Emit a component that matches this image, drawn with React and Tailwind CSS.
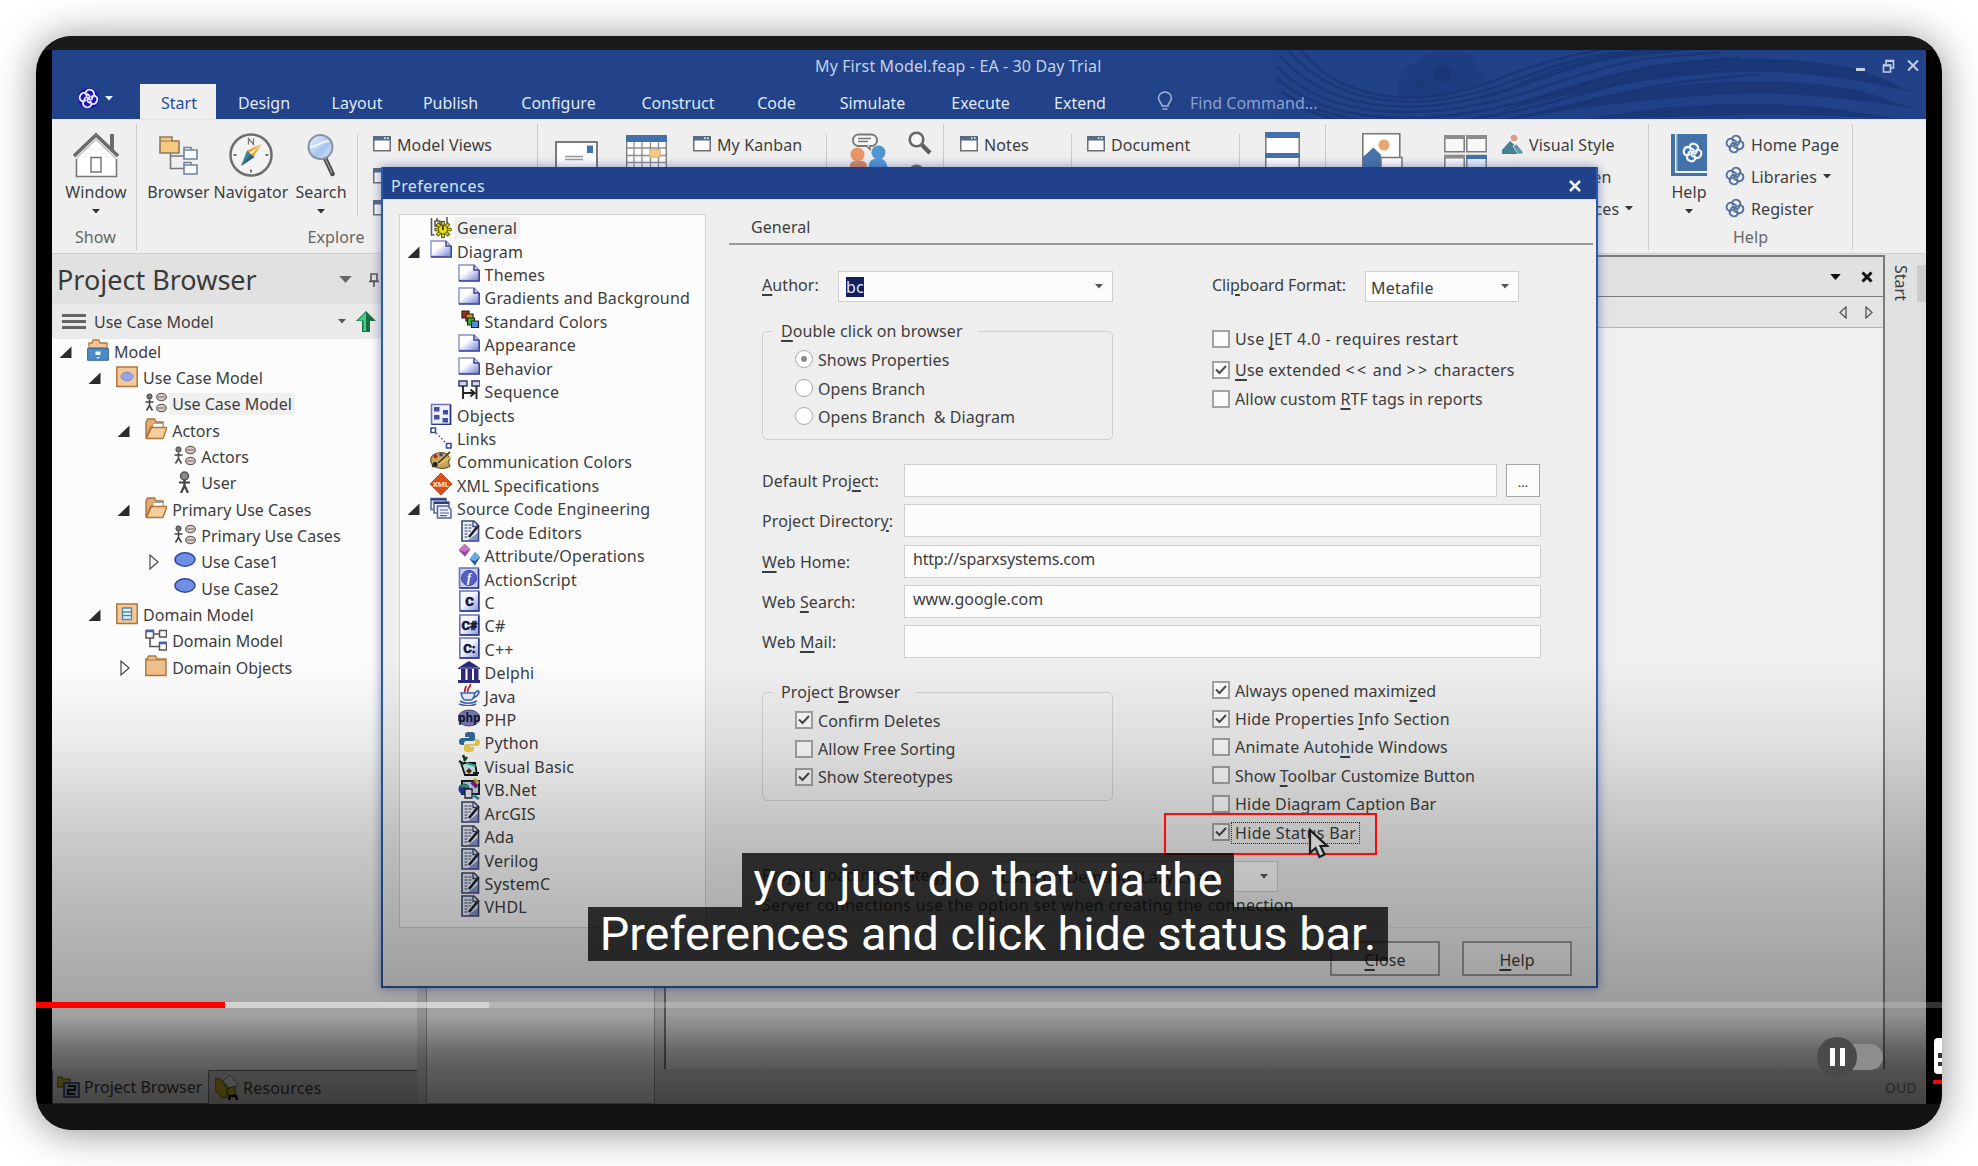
import React from "react";

/* ---------- small shared glyphs ---------- */
const Caret = ({ w = 8, color = "#333" }) => (
  <svg width={w} height={w / 2 + 0.5} viewBox="0 0 8 4.5" className="shrink-0"><path d="M0 0h8L4 4.5z" fill={color} /></svg>
);
const Knot = ({ size = 20, color = "#54719f", sw = 1.9 }) => (
  <svg width={size} height={size} viewBox="0 0 20 20" fill="none" stroke={color} strokeWidth={sw} className="shrink-0">
    {[0, 90, 180, 270].map((a) => (
      <path key={a} transform={`rotate(${a + 15} 10 10)`} d="M10 10.500C11.500 8.500 11 6.500 7.600 6.400M6 4.800C6.600 .4 13.400 .4 14.200 5.200" strokeLinecap="round" />
    ))}
    {[0, 90, 180, 270].map((a) => (
      <path key={a} transform={`rotate(${a + 15} 10 10)`} d="M6 4.800C5.700 6.400 6.200 7 7.600 7.400" strokeLinecap="round" />
    ))}
  </svg>
);
const Win = () => (
  <svg width="18" height="16" viewBox="0 0 18 16" className="shrink-0">
    <rect x=".75" y=".75" width="16.5" height="14" fill="#fbfbfb" stroke="#6b6f75" strokeWidth="1.5" />
    <path d="M0 0h18v4.5H0z" fill="#566b86" /><path d="M11 1.3h1.6v1.6H11zM14 1.3h1.6v1.6H14z" fill="#e8eef5" />
  </svg>
);

/* ---------- title bar ---------- */
const Swirls = () => (
  <svg className="absolute right-0 top-0" width="660" height="69" viewBox="1266 50 660 69" fill="none">
    <path d="M1398 95C1396 70 1412 62 1420 60C1428 48 1462 44 1476 60C1476 70 1488 72 1484 82C1450 98 1420 100 1398 95z" fill="#1d3b7d" opacity=".7" />
    <g fill="#1a3573" opacity=".6"><circle cx="1443" cy="74" r="9" /><circle cx="1420" cy="84" r="5" /></g>
    <g stroke="#1a3573" strokeWidth="2.4" opacity=".8">
      <path d="M1300 50C1345 104 1420 108 1490 82S1570 56 1600 50" />
      <path d="M1288 50C1340 112 1430 112 1510 82S1600 56 1640 50" />
      <path d="M1280 56C1335 118 1430 118 1525 84S1620 58 1680 50" />
      <path d="M1276 66C1330 122 1430 124 1540 88S1640 60 1720 52" />
      <path d="M1276 78C1330 126 1430 130 1550 94S1670 64 1740 58" />
      <path d="M1282 92C1340 130 1440 134 1560 100S1690 70 1760 64" />
      <path d="M1300 108C1360 132 1450 136 1570 106S1690 82 1760 74" />
    </g>
    <g fill="#1a3573" opacity=".8">
      <path d="M1500 112C1600 68 1700 54 1790 60S1880 82 1920 94C1860 80 1800 70 1740 72S1590 86 1500 112z" />
      <path d="M1520 118C1610 88 1710 78 1790 82S1880 100 1922 110C1860 100 1800 92 1740 94S1600 104 1520 118z" />
      <path d="M1590 119C1660 104 1750 100 1830 108L1900 119C1860 117 1800 114 1740 115z" />
      <path d="M1480 104C1550 66 1610 54 1690 50H1640C1580 58 1530 74 1480 104z" />
    </g>
  </svg>
);
const MENU = [
  ["Design", "w-[96px]"], ["Layout", "w-[90px]"], ["Publish", "w-[97px]"], ["Configure", "w-[119px]"],
  ["Construct", "w-[120px]"], ["Code", "w-[77px]"], ["Simulate", "w-[115px]"], ["Execute", "w-[101px]"], ["Extend", "w-[98px]"],
];
const TitleBar = () => (
  <header className="relative flex h-[69px] flex-col bg-[#224289] text-[#dfe9f8]">
    <Swirls />
    <div className="relative flex h-[34px] items-center pb-[2px]">
      <div className="flex-1 pl-[763px] tracking-[0.120px] text-[#c3d2ec]">My First Model.feap - EA - 30 Day Trial</div>
      <svg width="66" height="16" viewBox="0 0 66 16" className="mr-[6px]" fill="none" stroke="#c3cfe4" strokeWidth="2">
        <path d="M2 11.5h9" strokeWidth="3" />
        <path d="M29.5 7h7v7h-7zM32 6V2.5h7.5V10H37" strokeWidth="1.6" /><path d="M29 7.5h8M32 3h8" />
        <path d="M54 2.5l10 10M64 2.5l-10 10" />
      </svg>
    </div>
    <div className="relative flex h-[35px] items-center">
      <div className="flex w-[88px] items-center gap-[6px] pb-[6px] pl-[26px]">
        <span className="rounded-full bg-[#1a12b8]"><Knot size={21} color="#e6e6ff" sw={1.7} /></span>
        <Caret w={8} color="#e8f4ff" />
      </div>
      <div className="flex h-full w-[76px] items-center justify-center bg-[#efefef] text-[#1f5099]"><span className="pt-[3px] pl-[2px]">Start</span></div>
      {MENU.map(([t, w]) => <div key={t} className={`${w} pt-[3px] text-center`}>{t}</div>)}
      <svg width="16" height="20" viewBox="0 0 16 20" className="ml-[28px] mb-[2px] shrink-0" fill="none" stroke="#9fb3d6" strokeWidth="1.6">
        <path d="M5 15C5 12 1.5 10.500 1.500 7A6.400 5.900 0 0 1 14.500 7C14.500 10.500 11 12 11 15zM5.500 18h5" />
      </svg>
      <span className="pl-[17px] pt-[3px] text-[#8ba1cb]">Find Command...</span>
    </div>
  </header>
);

/* ---------- ribbon ---------- */
const House = () => (
  <svg width="46" height="46" viewBox="0 0 46 46"><path d="M3 26L23 7l20 19v19H3z" fill="#fff" /><path d="M3.500 27v17.500h40V27" fill="none" stroke="#777" strokeWidth="1.6" />
    <path d="M1 24L23 3l22 21" fill="none" stroke="#6b6b6b" strokeWidth="3.500" /><path d="M3 26.500L23 7.500l20 19" fill="none" stroke="#9a9a9a" strokeWidth="1" />
    <path d="M37 2h4v17l-4-4z" fill="#6b6b6b" /><rect x="18" y="25.500" width="10" height="14.500" fill="#fff" stroke="#777" strokeWidth="1.500" /></svg>
);
const BrowserIcon = () => (
  <svg width="40" height="42" viewBox="0 0 40 42"><path d="M1 3h12v4h7v12H1z" fill="#f7c97f" stroke="#8c7a5c" strokeWidth="1.6" /><path d="M1 7h12" stroke="#8c7a5c" />
    <path d="M11.500 19v15.500H25M11.500 22H25" fill="none" stroke="#777" strokeWidth="1.600" />
    {[0, 15].map((y) => <path key={y} transform={`translate(0 ${y})`} d="M25 13.500h7V16h6v9H25zM25 16h8" fill="#f8fbff" stroke="#70839c" strokeWidth="1.600" />)}</svg>
);
const Compass = () => (
  <svg width="44" height="44" viewBox="0 0 44 44"><circle cx="22" cy="22" r="20.500" fill="#f3f3f3" stroke="#6f6f6f" strokeWidth="2.500" />
    <path d="M32.500 11L18 17.500l6.500 6z" fill="#ef9f22" /><path d="M32.500 11L20 20l2 2z" fill="#fff0c8" /><path d="M12 33l6-15.500 7.500 6.500z" fill="#3c8595" /><path d="M12 33l9-11 4.500 2z" fill="#2c5f78" />
    <path d="M19.500 11.500V5.500l5 6v-6" fill="none" stroke="#777" strokeWidth="1.300" /><path d="M4.500 22h3M36.500 22h3M22 36.500v3" stroke="#777" strokeWidth="2" /></svg>
);
const Lens = () => (
  <svg width="28" height="44" viewBox="0 0 28 44"><defs><linearGradient id="ln" x1="0" y1="0" x2="1" y2="1"><stop offset="0" stopColor="#eaf2ff" /><stop offset=".6" stopColor="#a6c3ee" /><stop offset="1" stopColor="#e4eeff" /></linearGradient></defs>
    <path d="M18 25l7.500 16" stroke="#4b4b4b" strokeWidth="4.500" strokeLinecap="round" /><path d="M18.500 26l6.500 14" stroke="#a5a5a5" strokeWidth="1.200" />
    <circle cx="13.500" cy="14" r="12" fill="url(#ln)" stroke="#8891a0" strokeWidth="2" /><path d="M3.500 14C10 14 12 9 22 8" stroke="#fff" strokeWidth="2.500" fill="none" opacity=".7" /></svg>
);
const Mail = () => (
  <svg width="43" height="30" viewBox="0 0 43 30"><rect x="1" y="1" width="41" height="28" fill="#fff" stroke="#6e6e6e" strokeWidth="1.800" /><rect x="32" y="4.500" width="6" height="7.500" fill="#4470ae" /><path d="M10 15.500h18M10 18.500h18" stroke="#999" strokeWidth="1.300" /></svg>
);
const Calendar = () => (
  <svg width="41" height="42" viewBox="0 0 41 42"><path d="M.7 1h39.600v40H.7z" fill="#fff" stroke="#7d7d7d" strokeWidth="1.400" /><path d="M0 0h41v7H0z" fill="#4470ae" />
    <path d="M8 7v34M16 7v34M24.500 7v34M32.500 7v34M1 13h39M1 20.500h39M1 27.500h39M1 34.500h39" stroke="#8d8d8d" strokeWidth="1.300" /><rect x="24" y="15" width="10" height="7" fill="#f9ce93" stroke="#e9b268" strokeWidth="1.400" /></svg>
);
const People = () => (
  <svg width="40" height="44" viewBox="0 0 40 44"><rect x="4" y="1.500" width="24" height="11.500" rx="5.500" fill="#f6f6f6" stroke="#777" strokeWidth="1.800" /><path d="M17 12.500l4 4v-4" fill="#f6f6f6" stroke="#777" strokeWidth="1.400" /><path d="M9 5.500h13M9 8.500h10" stroke="#777" strokeWidth="1.300" />
    <circle cx="8.500" cy="21.500" r="7" fill="#e8956a" /><path d="M1 43V33q0-5 5-5h7q4 0 5 5v10z" fill="#d9895f" /><circle cx="29.500" cy="19.500" r="7" fill="#4f97d2" /><path d="M20 43V33q0-6 5-7h8q4 1 5.500 8v9z" fill="#4f97d2" /></svg>
);
const SmallLens = () => (<svg width="24" height="24" viewBox="0 0 24 24"><circle cx="8.500" cy="8.500" r="6.800" fill="#f6f6f6" stroke="#666" strokeWidth="2.600" /><path d="M14 14l8 8" stroke="#5d5d5d" strokeWidth="4.500" /></svg>);
const Bands = () => (<svg width="35" height="44" viewBox="0 0 35 44"><path d="M.8 1h33.400v42H.8z" fill="#fff" stroke="#777" strokeWidth="1.500" /><path d="M0 0h35v6H0zM0 21h35v5H0z" fill="#4470ae" /></svg>);
const Picture = () => (<svg width="41" height="44" viewBox="0 0 41 44"><path d="M.8.800h37v42H.8z" fill="#fff" stroke="#777" strokeWidth="1.600" /><circle cx="22" cy="12" r="5.500" fill="#e9a673" /><path d="M1 24l10.500-9.500L19 22v21H1z" fill="#4674a9" /><path d="M19 24.500h21V43H19z" fill="#fff" stroke="#777" strokeWidth="1.500" /></svg>);
const Tiles = () => (
  <svg width="43" height="44" viewBox="0 0 43 44"><g fill="#f8f8f8" stroke="#7a7a7a" strokeWidth="1.500"><path d="M.8.800h19.400v16H.8zM22.800.800h19.400v16H22.800zM.8 20.500h19.400V43H.8z" /><path d="M22.800 20.500h19.400V43H22.800z" fill="#e6eefb" /></g>
    <path d="M0 0h21v4H0zM22 0h21v4H22zM0 20h21v3.500H0z" fill="#8c8c8c" /><path d="M22 20h21v4H22z" fill="#4470ae" /></svg>
);
const Landscape = () => (<svg width="21" height="20" viewBox="0 0 21 20" className="shrink-0"><circle cx="12" cy="4" r="3.300" fill="#dd9f83" /><path d="M0 20v-4l8-9 12 10.500V20z" fill="#448192" /><path d="M11 12l3.500-2 6.500 8v2h-5z" fill="#6198a5" stroke="#efefef" strokeWidth=".8" /></svg>);
const Book = () => (
  <span className="relative flex h-[42px] w-[36px] items-center justify-center bg-[#4372aa] pl-[7px] pb-1">
    <svg className="absolute left-0 top-0" width="36" height="42"><path d="M6.500 0v37H36v2H4V0z" fill="#f2f6fb" /><path d="M6 0v37" stroke="#4372aa" /></svg>
    <Knot size={21} color="#f2f6fb" sw={2} />
  </span>
);
const Big = ({ icon, label, w, caret }) => (
  <div className={`${w} flex shrink-0 flex-col items-center pt-[9px]`}>
    <div className="flex h-[51px] items-center">{icon}</div>
    <span className="h-[24px] leading-[24px]">{label}</span>
    {caret && <span className="pt-[5px]"><Caret /></span>}
  </div>
);
const Line = ({ icon, children, caret }) => (
  <div className="flex h-[32px] items-center gap-[6px] whitespace-nowrap">{icon}<span className="pt-px">{children}</span>{caret && <Caret w={8} />}</div>
);
const Group = ({ w, label, children }) => (
  <div className={`${w} flex shrink-0 flex-col`}>
    <div className="flex h-[126px] flex-col border-r border-[#cacaca] mt-[4px]">
      <div className="-mt-[4px] flex h-[104px]">{children}</div>
      <div className="text-center leading-[26px] text-[#666]">{label}</div>
    </div>
  </div>
);
const Sep = () => <div className="mt-[14px] h-[83px] w-px shrink-0 bg-[#cacaca]" />;
const Ribbon = () => (
  <div className="flex h-[135px] border-b border-[#cfcfcf] border-t border-t-[#dbe6fa] bg-[#efefef] tracking-[0.1px]">
    <Group w="w-[85px]" label={<span className="pl-[3px]">Show</span>}><Big w="w-[88px]" icon={<House />} label="Window" caret /></Group>
    <Group w="w-[401px]" label={<span className="pr-[2px]">Explore</span>}>
      <Big w="w-[83px]" icon={<BrowserIcon />} label="Browser" />
      <Big w="w-[62px]" icon={<Compass />} label="Navigator" />
      <Big w="w-[78px]" icon={<Lens />} label="Search" caret />
      <div className="-ml-[3px]"><Sep /></div>
      <div className="flex flex-col pl-[15px] pt-[8px]"><Line icon={<Win />}>Model Views</Line><Line icon={<Win />} /><Line icon={<Win />} /></div>
    </Group>
    <Group w="w-[406px]" label="">
      <div className="pl-[17px] pt-[21px]"><Mail /></div>
      <div className="pl-[28px] pt-[15px]"><Calendar /></div>
      <div className="pl-[26px] pt-[8px]"><Line icon={<Win />}>My Kanban</Line></div>
      <div className="flex-1" /><Sep />
      <div className="pl-[22px] pt-[13px]"><People /></div>
      <div className="flex flex-col gap-[9px] pl-[19px] pr-[11px] pt-[11px]"><SmallLens /><SmallLens /></div>
    </Group>
    <Group w="w-[382px]" label="">
      <div className="w-[127px] pl-[16px] pt-[8px]"><Line icon={<Win />}>Notes</Line></div><Sep />
      <div className="w-[167px] pl-[15px] pt-[8px]"><Line icon={<Win />}>Document</Line></div><Sep />
      <div className="pl-[25px] pt-[12px]"><Bands /></div>
    </Group>
    <Group w="w-[323px]" label="">
      <div className="pl-[36px] pt-[13px]"><Picture /></div>
      <div className="pl-[41px] pt-[15px]"><Tiles /></div>
      <div className="flex flex-col pl-[15px] pt-[8px]"><Line icon={<Landscape />}>Visual Style</Line><Line icon={<Landscape />}>Full Screen</Line><Line icon={<Landscape />} caret>Preferences</Line></div>
    </Group>
    <Group w="w-[204px]" label="Help">
      <Big w="w-[80px]" icon={<Book />} label="Help" caret />
      <div className="flex flex-col pt-[8px] -ml-[4px]"><Line icon={<Knot />}>Home Page</Line><Line icon={<Knot />} caret>Libraries</Line><Line icon={<Knot />}>Register</Line></div>
    </Group>
  </div>
);

/* ---------- tree icons ---------- */
const S = ({ children, ...p }) => <svg width="22" height="22" viewBox="0 0 22 22" fill="none" className="shrink-0" {...p}>{children}</svg>;
const I = {
  model: <S><path d="M2 9V4h3l1-3h6l1 3h7v5z" fill="#f3c592" stroke="#b5793c" strokeWidth="1.300" /><path d="M.6 9.500h20.800v11.800H.6z" fill="#4c8cc4" stroke="#35699a" /><path d="M8.500 12.500h5v3.500h-5z" fill="#e8f2fb" /><path d="M9 18h4l-2 2z" fill="#cde" /></S>,
  ucPkg: <S><rect x=".8" y="1" width="20.400" height="19.500" fill="#f5c898" stroke="#ad763f" strokeWidth="1.500" /><ellipse cx="11" cy="10.500" rx="6" ry="4.300" fill="#97a5e6" stroke="#7d8bd0" /></S>,
  dmPkg: <S><rect x=".8" y="1" width="20.400" height="19.500" fill="#f5c898" stroke="#ad763f" strokeWidth="1.500" /><path d="M6.500 5h9v11.500h-9z" fill="#eaf4fb" stroke="#4d86ae" strokeWidth="1.300" /><path d="M6.500 9h9M6.500 12.500h9" stroke="#4d86ae" strokeWidth="1.300" /></S>,
  ucDia: <S><circle cx="4.500" cy="4.500" r="2.600" fill="#777" stroke="#444" /><path d="M4.500 7.500V14M0.500 10h8M4.500 13.500L1.500 18.500M4.500 13.500l3 5" stroke="#444" strokeWidth="1.600" /><g fill="#ddd0cc" stroke="#6b625f" strokeWidth="1.300"><ellipse cx="16.500" cy="5" rx="4.800" ry="3.600" /><ellipse cx="16.500" cy="16" rx="4.800" ry="3.600" /></g><path d="M13 5h7M13 16h7" stroke="#6b625f" /></S>,
  user: <S><circle cx="10.500" cy="5" r="4" fill="#8a8a8a" stroke="#555" strokeWidth="1.500" /><path d="M10.500 9v6M5 11.500h11M10.500 14.500L7 22M10.500 14.500L14 22" stroke="#444" strokeWidth="2.200" /></S>,
  open: <S><path d="M1 20V4l1.500-3h7l1.500 3h7v5H6z" fill="#e3ab72" stroke="#ad763f" strokeWidth="1.400" /><path d="M8 5.500h10V11H8z" fill="#fff" stroke="#999" strokeWidth=".8" /><path d="M1.500 20.500L6.500 9.500H22l-4 11z" fill="#f8cd9c" stroke="#ad763f" strokeWidth="1.400" /></S>,
  closed: <S><path d="M.8 20.500V4h1.500L3.500 1h7L12 4h9v16.500z" fill="#efc08c" stroke="#ad763f" strokeWidth="1.400" /><path d="M1 5h20" stroke="#ad763f" /></S>,
  oval: <S><ellipse cx="11" cy="9.500" rx="10" ry="6.700" fill="#6f8ee6" stroke="#34489b" strokeWidth="1.500" /></S>,
  dmDia: <S><g fill="#fff" stroke="#555" strokeWidth="1.500"><path d="M1 1.500h7.500V9H1zM14.500 1.500h7V8h-7zM14.500 13.500h7V21h-7z" /></g><path d="M1 2h8M14.500 14h7" stroke="#3b66ad" strokeWidth="2.500" /><path d="M9 5h5M5 9v8.500h9" stroke="#555" strokeWidth="1.600" /></S>,
  gear: <S><path d="M1.500 2v17h3M7 5V2M5 5h5v5H5z" stroke="#555" strokeWidth="1.600" /><path d="M17 1v8" stroke="#555" strokeWidth="1.500" /><g stroke="#3a3800" strokeWidth="3.600"><path d="M13 5v17M4.500 13.500h17M7 7.500l12 12M19 7.500l-12 12" /></g><g stroke="#d8d000" strokeWidth="2"><path d="M13 6v15M5.500 13.500h15.500M7.500 8l11 11M18.500 8l-11 11" /></g><circle cx="13" cy="13.500" r="4.500" fill="#e6df12" stroke="#5b5700" /><path d="M13 9v5" stroke="#444" strokeWidth="2" /></S>,
  page: <S><defs><linearGradient id="pg" x1="0" y1="0" x2="1" y2="1"><stop offset=".4" stopColor="#fff" /><stop offset="1" stopColor="#7480d4" /></linearGradient></defs><path d="M1 2h15l5 5v10.500H1z" fill="url(#pg)" stroke="#8a8fc8" strokeWidth="1.400" /><path d="M16 2v5h5M21.300 7v11H1" stroke="#3b429b" strokeWidth="1.500" /></S>,
  colors: <S><g stroke="#222" strokeWidth="1.200"><path d="M4 2h7v7H4z" fill="#b02a14" /><path d="M8 5h7v7H8z" fill="#d98a1e" /><path d="M9.500 9h7v7h-7z" fill="#35b52b" /><path d="M13.500 12h7v6.500h-7z" fill="#4b93d8" /></g></S>,
  seq: <S><path d="M1 1h8v5H1zM14 1h8v5h-8z" fill="#cdd3ee" stroke="#333a66" strokeWidth="1.500" /><path d="M5 6v13M18.500 6v13M5 13h11M12.500 9.500l4 3.500-4 3.500" stroke="#222" strokeWidth="1.900" /></S>,
  objects: <S><path d="M1.500 1.500h19v20h-19z" fill="#eef0fb" stroke="#6a73b8" strokeWidth="1.600" /><path d="M20.500 2v19.500H2" stroke="#2d3684" strokeWidth="1.500" /><g fill="#444f9e"><path d="M4 4h5.500v4.500H4zM13 7h5v4.500h-5zM4 12h5.500v4.500H4zM12.500 15h5.500v4.500h-5.500z" /></g></S>,
  links: <S><path d="M1 1h4.500v4.500H1zM16.500 16.500H21V21h-4.500z" fill="#fff" stroke="#3e4a9b" strokeWidth="1.600" /><path d="M6 6l10 10" stroke="#444e86" strokeWidth="1.500" strokeDasharray="1.500 2.200" /></S>,
  palette: <S><path d="M1 8C3 3 12 1 17 4l3 5c-3 3-1 5 0 7-3 3-10 3-15 1-3-2-5-5-4-9z" fill="#c8a45c" stroke="#6f5520" strokeWidth="1.200" /><circle cx="5.500" cy="6.500" r="2" fill="#b52a22" /><circle cx="11" cy="4.800" r="1.700" fill="#2c3fb0" /><path d="M3 17L20 2M9 14L21 7" stroke="#e1c466" strokeWidth="2" /><path d="M2 17l5-4M8 13l12-11" stroke="#332b18" strokeWidth="1.500" /><circle cx="5" cy="14.500" r="2.500" fill="#222" /></S>,
  xml: <S><path d="M11 0l11 11-11 11L0 11z" fill="#dc4f1b" stroke="#a93a12" strokeWidth=".8" /><text x="11" y="14" fontSize="8" fontWeight="700" fill="#ffe9c8" textAnchor="middle" fontFamily="Roboto, sans-serif" letterSpacing="0">XML</text></S>,
  source: <S><g fill="#eef1fb" stroke="#55659f" strokeWidth="1.500"><path d="M1 1.500h15v11H1z" /><path d="M4 5h15v11H4z" /><path d="M7.500 9h10l3.500 3.500V21H7.500z" /></g><path d="M1 2.500h15M4 6h15" stroke="#2c3c80" strokeWidth="1.800" /><path d="M10 13h8M10 16h9M10 18.700h7" stroke="#55659f" strokeWidth="1.200" /></S>,
  editor: <S><path d="M4 1h12l4.500 4.500V21H4z" fill="#e9edf8" stroke="#3d4468" strokeWidth="1.600" /><path d="M6.500 5h7M6.500 8h7M6.500 11h6M6.500 14h4M6.500 17h3" stroke="#6f7796" strokeWidth="1.300" strokeDasharray="3 1" /><path d="M20.500 12v9H9z" fill="#4857b0" opacity=".6" /><path d="M20.500 5.500L11 17" stroke="#1d1f2c" strokeWidth="2.600" /><path d="M15 1v5.500h5" stroke="#3d4468" strokeWidth="1.300" /></S>,
  attr: <S><path d="M6.500-.5L12.500 5 7 12.500.500 6z" fill="#c873c0" /><path d="M.5 6L7 8l5.500-3L7 12.500z" fill="#93428f" /><path d="M17 7.500L22.500 13 17 21l-5.500-6z" fill="#6aa8df" /><path d="M11.500 15l5.500 2 5-4-5 8.500z" fill="#2d5f9c" /></S>,
  as: <S><path d="M1.500 1h19v20h-19z" fill="#c8cef0" stroke="#6a73b8" strokeWidth="1.600" /><path d="M20.500 2v19H2" stroke="#2d3684" strokeWidth="1.400" /><circle cx="11" cy="11" r="7.500" fill="#5560c4" stroke="#3b429b" /><text x="11" y="15" fontSize="12" fontStyle="italic" fontWeight="700" fill="#fff" textAnchor="middle" fontFamily="Liberation Serif, serif">f</text></S>,
  arch: <S><path d="M0 7L6 3 11 0l5 3 6 4v1H0zM0 19h23v3H0z" fill="#2e2a7a" /><path d="M2 7h19" stroke="#8d8bd0" /><g fill="#2e2a7a"><path d="M3 8h4.500v11H3zM9.500 8h4.500v11H9.500zM16 8h4.500v11H16z" /></g></S>,
  java: <S><path d="M12 0c2 3-4 4-2 8M8 2c0 3-2 3-1 6" stroke="#c32025" strokeWidth="1.800" /><path d="M3 9h14c-1 4-2 7-4 7H7c-2 0-3-3-4-7z" fill="#e7eefb" stroke="#3d64ad" strokeWidth="1.500" /><path d="M17 9c5-6 6 2-2 5" stroke="#3d64ad" strokeWidth="1.700" /><path d="M2 17c4 3 12 3 17 0M1 20c6 2 13 2 17 0" stroke="#3d64ad" strokeWidth="1.600" /></S>,
  php: <S><ellipse cx="11" cy="10" rx="11" ry="8" fill="#7479b4" stroke="#4d4f86" /><text x="11.200" y="13.500" fontSize="11.500" fontWeight="700" fill="#14142a" textAnchor="middle" fontFamily="Open Sans, sans-serif" letterSpacing="0">php</text></S>,
  py: <S><path d="M10 1h4q3 0 3 3v4q0 2-2 2H8q-2 0-2 3v1H4q-3 0-3-3.500T4.500 7H11V6H7V4q0-3 3-3z" fill="#356a9a" /><path d="M12 21H9q-3 0-3-3v-2q0-3 2-3h7q2 0 2-3V8h2q3 0 3 3.500T18.500 15H12v1h4v2q0 3-4 3z" fill="#f0ce4e" /></S>,
  vb: <S><path d="M3 9h14l2 12H7z" fill="#cdeee6" stroke="#111" strokeWidth="1.800" /><path d="M1 7l5 3M5 1l2 5M9 3L6 7" stroke="#153c1f" strokeWidth="2.500" /><path d="M8 9l10 3" stroke="#28b0a2" strokeWidth="2" /><path d="M8 17l3-3 3 3-3 3z" fill="#6d1f1f" /><path d="M15 19h6" stroke="#222" strokeWidth="2" /></S>,
  vbnet: <S><path d="M4 3h17v13H4z" fill="#cbd3ee" stroke="#1c1c2c" strokeWidth="2" /><circle cx="6" cy="11" r="5.500" fill="#2138a8" /><path d="M3 9c3-4 5 1 7-1" stroke="#2fae4a" strokeWidth="2.500" /><path d="M7 11h7v9H7z" fill="#e9ecfa" stroke="#223" strokeWidth="1.300" /><path d="M14 4l5 5" stroke="#7a1f86" strokeWidth="4" /><path d="M16 1l5 4" stroke="#d0b41d" strokeWidth="2.500" /><path d="M15 17l6 4" stroke="#3a9a9a" strokeWidth="3" /></S>,
};
const Letter = ({ t }) => (
  <S><defs><linearGradient id="lt" x1="0" y1="0" x2="1" y2="1"><stop offset=".45" stopColor="#f4f6ff" /><stop offset="1" stopColor="#8792da" /></linearGradient></defs>
    <path d="M1.800 1h19v20h-19z" fill="url(#lt)" stroke="#6a73b8" strokeWidth="1.600" /><path d="M20.800 1.500V21H2" stroke="#2d3684" strokeWidth="1.500" />
    <text x="11.500" y="15.500" fontSize="13" fontWeight="900" fill="#14163a" stroke="#14163a" strokeWidth=".5" textAnchor="middle" fontFamily="Roboto, sans-serif" letterSpacing="0">{t}</text></S>
);

/* ---------- trees ---------- */
const Arrow = ({ kind }) => (
  <svg width="13" height="16" viewBox="0 0 13 16" className="shrink-0 overflow-visible">
    {kind === "o" && <path d="M12.500 2.500V14H.5z" fill="#2b2b2b" />}
    {kind === "c" && <path d="M4 1v14l8-7z" fill="#fff" stroke="#444" strokeWidth="1.200" />}
  </svg>
);
const TREE = [
  [0, "o", "model", "Model"], [1, "o", "ucPkg", "Use Case Model"], [2, "", "ucDia", "Use Case Model", 1], [2, "o", "open", "Actors"],
  [3, "", "ucDia", "Actors"], [3, "", "user", "User"], [2, "o", "open", "Primary Use Cases"], [3, "", "ucDia", "Primary Use Cases"],
  [3, "c", "oval", "Use Case1"], [3, "", "oval", "Use Case2"], [1, "o", "dmPkg", "Domain Model"], [2, "", "dmDia", "Domain Model"], [2, "c", "closed", "Domain Objects"],
];
const PREFS = [
  [0, "", "gear", "General", 1], [0, "o", "page", "Diagram"], [1, "", "page", "Themes"], [1, "", "page", "Gradients and Background"],
  [1, "", "colors", "Standard Colors"], [1, "", "page", "Appearance"], [1, "", "page", "Behavior"], [1, "", "seq", "Sequence"],
  [0, "", "objects", "Objects"], [0, "", "links", "Links"], [0, "", "palette", "Communication Colors"], [0, "", "xml", "XML Specifications"],
  [0, "o", "source", "Source Code Engineering"], [1, "", "editor", "Code Editors"], [1, "", "attr", "Attribute/Operations"], [1, "", "as", "ActionScript"],
  [1, "", "=C", "C"], [1, "", "=C#", "C#"], [1, "", "=C:", "C++"], [1, "", "arch", "Delphi"], [1, "", "java", "Java"], [1, "", "php", "PHP"],
  [1, "", "py", "Python"], [1, "", "vb", "Visual Basic"], [1, "", "vbnet", "VB.Net"], [1, "", "editor", "ArcGIS"], [1, "", "editor", "Ada"],
  [1, "", "editor", "Verilog"], [1, "", "editor", "SystemC"], [1, "", "editor", "VHDL"],
];
const Row = ({ item, step, h, gap }) => {
  const [lvl, arrow, icon, text, sel] = item;
  return (
    <div className={`${h} flex items-center whitespace-nowrap`} style={{ paddingLeft: 7 + lvl * step }}>
      <Arrow kind={arrow} />
      <span className={`${gap} -mt-[3px]`}>{icon[0] === "=" ? <Letter t={icon.slice(1)} /> : I[icon]}</span>
      <span className={`ml-[2px] px-[3px] leading-[22px] ${sel ? "bg-[#f0f0f0]" : ""}`}>{text}</span>
    </div>
  );
};

const ProjectPanel = () => (
  <aside className="flex w-[365px] shrink-0 flex-col">
    <div className="flex h-[49px] items-center bg-[#e1e1e1] pl-[5px]">
      <span className="w-[203px] whitespace-nowrap text-[27px] leading-[48px] text-[#3a3a3a]">Project Browser</span>
      <span className="ml-[79px]"><Caret w={13} color="#666" /></span>
      <svg width="12" height="14" viewBox="0 0 12 14" className="ml-[16px]" fill="none" stroke="#555" strokeWidth="1.600"><path d="M3 1h6v7H3zM1 8.500h10M6 9v5" /></svg>
    </div>
    <div className="flex h-[35px] items-center bg-[#eaeaea] pl-[10px]">
      <div className="flex w-[24px] flex-col gap-[3px]"><i className="h-[3px] bg-[#666]" /><i className="h-[3px] bg-[#666]" /><i className="h-[3px] bg-[#666]" /></div>
      <span className="w-[243px] pl-[8px]">Use Case Model</span>
      <span className="ml-[9px]"><Caret w={8} color="#555" /></span>
      <svg width="20" height="21" viewBox="0 0 20 21" className="ml-[10px]"><path d="M10 0l10 10h-6v11H6V10H0z" fill="#1b6f45" /><path d="M10 1L2 9.500h5.500V20H10z" fill="#46d07f" /></svg>
    </div>
    <div className="flex-1 bg-[#fcfcfc]">
      <div className="-mt-[0.5px]">{TREE.map((it, i) => <Row key={i} item={it} step={29.1} h="h-[26.350px]" gap="ml-[15px]" />)}</div>
    </div>
    <div className="flex h-[34px] bg-[#d0d0d0]">
      <div className="flex w-[157px] items-center gap-[4px] border border-t-0 border-[#777] bg-[#eee] pl-[4px]">
        <svg width="23" height="23" viewBox="0 0 23 23"><path d="M0 2h5l1 2h7v8H0z" fill="#cabb2a" stroke="#5f5810" /><path d="M7 8h15v14H7z" fill="#b9bfe0" stroke="#3a3f78" strokeWidth="1.500" /><path d="M11 11h7v4h-7v4h7" fill="none" stroke="#222" strokeWidth="1.800" /></svg>
        <span>Project Browser</span>
      </div>
      <div className="flex flex-1 items-center gap-[4px] border-t border-[#777] pl-[6px]">
        <svg width="24" height="25" viewBox="0 0 24 25"><path d="M0 3l5 1 4 5 3 3v10l-5 1-7-8z" fill="#c8b31f" stroke="#5f5810" /><path d="M8 6l7-6 8 10-6 6z" fill="#e8e8e8" stroke="#666" strokeDasharray="2 .6" /><path d="M12 14l8-3v9l-6 2z" fill="#c8b31f" stroke="#5f5810" /><path d="M14 25l1-4h6l1 4" stroke="#111" strokeWidth="2.500" fill="none" /></svg>
        <span className="tracking-[0.200px]">Resources</span>
      </div>
    </div>
  </aside>
);

const Workspace = () => (
  <main className="flex min-h-0 flex-1 bg-[#e1e1e1] pt-[1px]">
    <ProjectPanel />
    <div className="ml-[9px] w-[229px] shrink-0 border-x border-b border-[#aaa] bg-[#fbfbfb]" />
    <div className="ml-[9px] mb-[35px] flex flex-1 flex-col border-x-2 border-t-2 border-[#7b7b7b] bg-[#f0f0f0]">
      <div className="flex h-[40px] items-center justify-end border-b border-[#7b7b7b] bg-[#e1e1e1] pr-[10px]">
        <Caret w={11} color="#111" />
        <svg width="12" height="12" viewBox="0 0 12 12" className="ml-[20px]" stroke="#111" strokeWidth="3"><path d="M1.500 1.500l9 9M10.500 1.500l-9 9" /></svg>
      </div>
      <div className="flex h-[31px] items-center justify-end gap-[18px] border-b border-[#b5b5b5] bg-[#e4e4e4] pr-[10px]">
        <svg width="8" height="13" viewBox="0 0 8 13" fill="none" stroke="#555" strokeWidth="1.300"><path d="M7 1v11L1 6.500z" /></svg>
        <svg width="8" height="13" viewBox="0 0 8 13" fill="none" stroke="#555" strokeWidth="1.300"><path d="M1 1v11l6-5.500z" /></svg>
      </div>
    </div>
    <div className="flex w-[41px] shrink-0 flex-col justify-between">
      <div className="flex justify-between pl-[7px] pt-[10px]">
        <span className="text-[16px] leading-[18px] [writing-mode:vertical-rl]">Start</span>
        <i className="h-[37px] w-[9px] bg-[#cbcbcb]" />
      </div>
      <span className="pb-[5px] pr-[14px] text-right text-[14px] leading-[22px] text-[#777]">OUD</span>
    </div>
  </main>
);

/* ---------- preferences dialog ---------- */
const U = ({ children }) => <span className="underline decoration-[1.500px] underline-offset-[3px]">{children}</span>;
const Check = ({ on, children, focus, h = "h-[28.400px]" }) => (
  <div className={`${h} flex items-center whitespace-nowrap`}>
    <span className="flex h-[18px] w-[18px] shrink-0 items-center justify-center border-2 border-[#a3a3a3] bg-[#fcfcfc]">
      {on && <svg width="12" height="10" viewBox="0 0 12 10" fill="none" stroke="#4a4a4a" strokeWidth="2"><path d="M1 4.500L4.500 8 11 1" /></svg>}
    </span>
    <span className={`ml-px mt-px border px-[3px] leading-[20px] ${focus ? "border-dotted border-[#333]" : "border-transparent"}`}>{children}</span>
  </div>
);
const Radio = ({ on, children }) => (
  <div className="flex h-[28.500px] items-center whitespace-pre">
    <span className="flex h-[18px] w-[18px] items-center justify-center rounded-full border-[1.500px] border-[#a9a9a9] bg-white">{on && <i className="h-[6px] w-[6px] rounded-full bg-[#8a8a8a]" />}</span>
    <span className="ml-[5px] mt-[2px]">{children}</span>
  </div>
);
const Combo = ({ w, children }) => (
  <div className={`${w} flex h-[31px] items-center justify-between border-[1.500px] border-[#cfcfcf] bg-[#fcfcfc] pr-[9px]`}>{children}<Caret w={8} color="#555" /></div>
);
const GroupBox = ({ legend, children }) => (
  <fieldset className="h-[120px] w-[351px] rounded-[5px] border-[1.500px] border-[#cfcfcf] pl-[32px]">
    <legend className="-ml-[23px] h-[22px] pl-[9px] pr-[15px] leading-[22px]">{legend}</legend>
    <div className="mt-[3px]">{children}</div>
  </fieldset>
);
const Field = ({ label, value, browse, h }) => (
  <div className={`${h} flex items-start`}>
    <span className="w-[142px] pt-[5px]">{label}</span>
    <span className="h-[33px] flex-1 border-[1.500px] border-[#cfcfcf] bg-[#fcfcfc] pl-[8px] leading-[26px] tracking-normal">{value}</span>
    {browse && <span className="ml-[9px] mr-px h-[33px] w-[34px] border-[1.500px] border-[#a5a5a5] bg-[#fbfbfb] text-center text-[13px] leading-[34px]">...</span>}
  </div>
);
const Button = ({ children }) => <div className="flex h-[35px] w-[110px] items-center justify-center border-2 border-[#9d9d9d] bg-[#f2f2f2] pt-[3px]">{children}</div>;

const Dialog = () => (
  <section className="absolute left-[329px] top-[117px] flex h-[821px] w-[1217px] flex-col border-2 border-t-0 border-[#2a5ba6] bg-[#eeeeee] shadow-[0_0_10px_rgba(40,70,160,0.55)]">
    <div className="flex h-[32px] shrink-0 items-center justify-between bg-[#21428a] pl-[8px] pr-[15px] pt-[5px] tracking-[0.450px] text-[#d4e2f7]">
      <span>Preferences</span>
      <svg width="12" height="12" viewBox="0 0 12 12" stroke="#eef5ff" strokeWidth="2.500"><path d="M1 1l10 10M11 1L1 11" /></svg>
    </div>
    <div className="flex min-h-0 flex-1 border-t border-[#d6e1f8]">
      <div className="ml-[16px] mt-[14px] h-[714px] w-[307px] shrink-0 border-[1.500px] border-[#d0d0d0] bg-[#fcfcfc] pt-[1.500px]">
        <div className="tracking-[0.170px]">{PREFS.map((it, i) => <Row key={i} item={it} step={27.6} h="h-[23.430px]" gap="ml-[10px]" />)}</div>
      </div>
      <div className="ml-[23px] flex flex-1 flex-col tracking-[0.080px]">
        <div className="mr-[3px] h-[45px] border-b-2 border-[#999] pl-[22px] leading-[55px]">General</div>
        <div className="flex h-[219px] pl-[33px] pt-[26px]">
          <div className="flex w-[450px] flex-col">
            <div className="flex h-[49px] items-start"><span className="w-[76px] pt-[2px]"><U>A</U>uthor:</span><Combo w="w-[275px]"><span className="ml-[7px] bg-[#14205e] leading-[20px] text-[#dfe4ff]">bc</span></Combo></div>
            <GroupBox legend={<><U>D</U>ouble click on browser</>}><Radio on>Shows Properties</Radio><Radio>Opens Branch</Radio><Radio>Opens Branch  &amp; Diagram</Radio></GroupBox>
          </div>
          <div className="flex flex-col">
            <div className="flex h-[52px] items-start"><span className="w-[153px] pt-[2px] tracking-[-0.100px]">Cli<U>p</U>board Format:</span><Combo w="w-[154px]"><span className="pl-[5px] pt-[2px] tracking-[0.200px]">Metafile</span></Combo></div>
            <Check h="h-[31px]"><span className="tracking-[0.400px]">Use <U>J</U>ET 4.0 - requires restart</span></Check>
            <Check h="h-[31px]" on><span className="tracking-[0.250px]"><U>U</U>se extended <span className="tracking-[2.200px]">&lt;&lt;</span> and <span className="tracking-[2.200px]">&gt;&gt;</span> characters</span></Check>
            <Check h="h-[27px]">Allow custom <U>R</U>TF tags in reports</Check>
          </div>
        </div>
        <div className="ml-[33px] h-[212px] w-[779px]">
          <Field h="h-[39.500px]" label={<>Default Proj<U>e</U>ct:</>} browse />
          <Field h="h-[41px]" label={<>Project Director<U>y</U>:</>} />
          <Field h="h-[40.500px]" label={<><U>W</U>eb Home:</>} value={<span className="tracking-[-0.200px]">http://sparxsystems.com</span>} />
          <Field h="h-[40px]" label={<>Web <U>S</U>earch:</>} value="www.google.com" />
          <Field h="h-[41px]" label={<>Web <U>M</U>ail:</>} />
        </div>
        <div className="flex h-[185px] pl-[33px]">
          <div className="w-[450px] pt-[5px]">
            <GroupBox legend={<>Project <U>B</U>rowser</>}><Check on>Confirm Deletes</Check><Check>Allow Free Sorting</Check><Check on>Show Stereotypes</Check></GroupBox>
          </div>
          <div>
            <Check on>Always opened maximi<U>z</U>ed</Check>
            <Check on><span className="tracking-[0.150px]">Hide Properties <U>I</U>nfo Section</span></Check>
            <Check><span className="tracking-[0.200px]">Animate Auto<U>h</U>ide Windows</span></Check>
            <Check><span className="tracking-normal">Show <U>T</U>oolbar Customize Button</span></Check>
            <Check><span className="tracking-[0.200px]">Hide Dia<U>g</U>ram Caption Bar</span></Check>
            <Check on focus><span className="tracking-[0.350px]">Hide Status Bar</span></Check>
          </div>
        </div>
        <div className="flex items-start pl-[33px]"><span className="w-[232px] pt-[2px]">Project Loading Strategy:</span><Combo w="w-[284px]"><span className="pl-[6px]">Load on Demand (Lazy Load)</span></Combo></div>
        <div className="h-[35px] pl-[33px] leading-[27px] tracking-[0.330px]">Server connections use the option set when creating the connection</div>
        <div className="mr-[6px] flex flex-1 justify-end gap-[22px] border-t border-[#ddd] pr-[18px] pt-[13px]"><Button><U>C</U>lose</Button><Button><U>H</U>elp</Button></div>
      </div>
    </div>
  </section>
);

/* ---------- video player chrome ---------- */
const Player = () => (
  <>
    <div className="absolute inset-x-0 top-[624px] h-[444px] bg-[linear-gradient(to_bottom,rgba(0,0,0,0)_0%,rgba(0,0,0,0.03)_9%,rgba(0,0,0,0.08)_20.300%,rgba(0,0,0,0.15)_31.500%,rgba(0,0,0,0.21)_42.800%,rgba(0,0,0,0.260)_54%,rgba(0,0,0,0.31)_67.600%,rgba(0,0,0,0.36)_80%,rgba(0,0,0,0.48)_84.500%,rgba(0,0,0,0.570)_87.800%,rgba(0,0,0,0.64)_92.300%,rgba(0,0,0,0.71)_100%)]" />
    <div className="absolute left-[1128px] top-[777px] h-[42px] w-[213px] border-2 border-[#f50b0b]" />
    <svg className="absolute left-[1272px] top-[792px]" width="24" height="32" viewBox="0 0 24 32"><path d="M2 2v23l5.500-5 4 9 5-2.500-4-8.500h6.500z" fill="#c9c9c9" stroke="#1d1d1d" strokeWidth="2.200" /></svg>
    <div className="absolute left-[552px] top-[817px] flex w-[800px] flex-col items-center whitespace-nowrap font-[Roboto,sans-serif] text-[46.800px] leading-[54px] text-white">
      <span className="flex h-[54px] w-[492px] justify-center bg-[#080808]/80">you just do that via the</span>
      <span className="flex h-[54px] w-[800px] justify-center bg-[#080808]/80">Preferences and click hide status bar.</span>
    </div>
    <div className="absolute inset-x-0 top-[966px] flex h-[6px] bg-white/20"><i className="w-[189px] bg-[#f00]" /><i className="w-[264px] bg-white/40" /></div>
    <div className="absolute left-[1781px] top-[1001px] flex h-[40px] w-[66px] items-center">
      <div className="ml-[20px] h-[26px] w-[46px] rounded-full bg-[#8d8d8d]" />
      <div className="absolute left-0 flex h-[40px] w-[40px] items-center justify-center gap-[5px] rounded-full bg-[#4a4a4a]"><i className="h-[18px] w-[5px] bg-white" /><i className="h-[18px] w-[5px] bg-white" /></div>
    </div>
    <div className="absolute -right-[28px] top-[1002px] h-[36px] w-[36px] rounded-[4px] bg-white"><i className="absolute left-[4px] top-[15px] h-[5px] w-[6px] bg-[#333]" /><i className="absolute left-[4px] top-[24px] h-[4px] w-[6px] bg-[#333]" /></div>
    <div className="absolute right-0 top-[1044px] h-[4px] w-[9px] bg-[#f00]" />
  </>
);

export default function App() {
  return (
    <div className="h-[1166px] w-[1978px] overflow-hidden bg-white p-[36px] font-['Noto_Sans',sans-serif] text-[16px] leading-[24px] text-[#3d3d3d]">
      <div className="h-[1094px] w-[1906px] rounded-[36px] shadow-[0_2px_40px_rgba(0,0,0,0.45)]">
        <div className="relative h-full overflow-hidden rounded-[36px] bg-black">
          <div className="h-[14px] bg-[#191919]" />
          <div className="relative mx-[16px] flex h-[1054px] flex-col overflow-hidden">
            <TitleBar />
            <Ribbon />
            <Workspace />
            <Dialog />
          </div>
          <div className="h-[26px] bg-[#131313]" />
          <Player />
        </div>
      </div>
    </div>
  );
}
